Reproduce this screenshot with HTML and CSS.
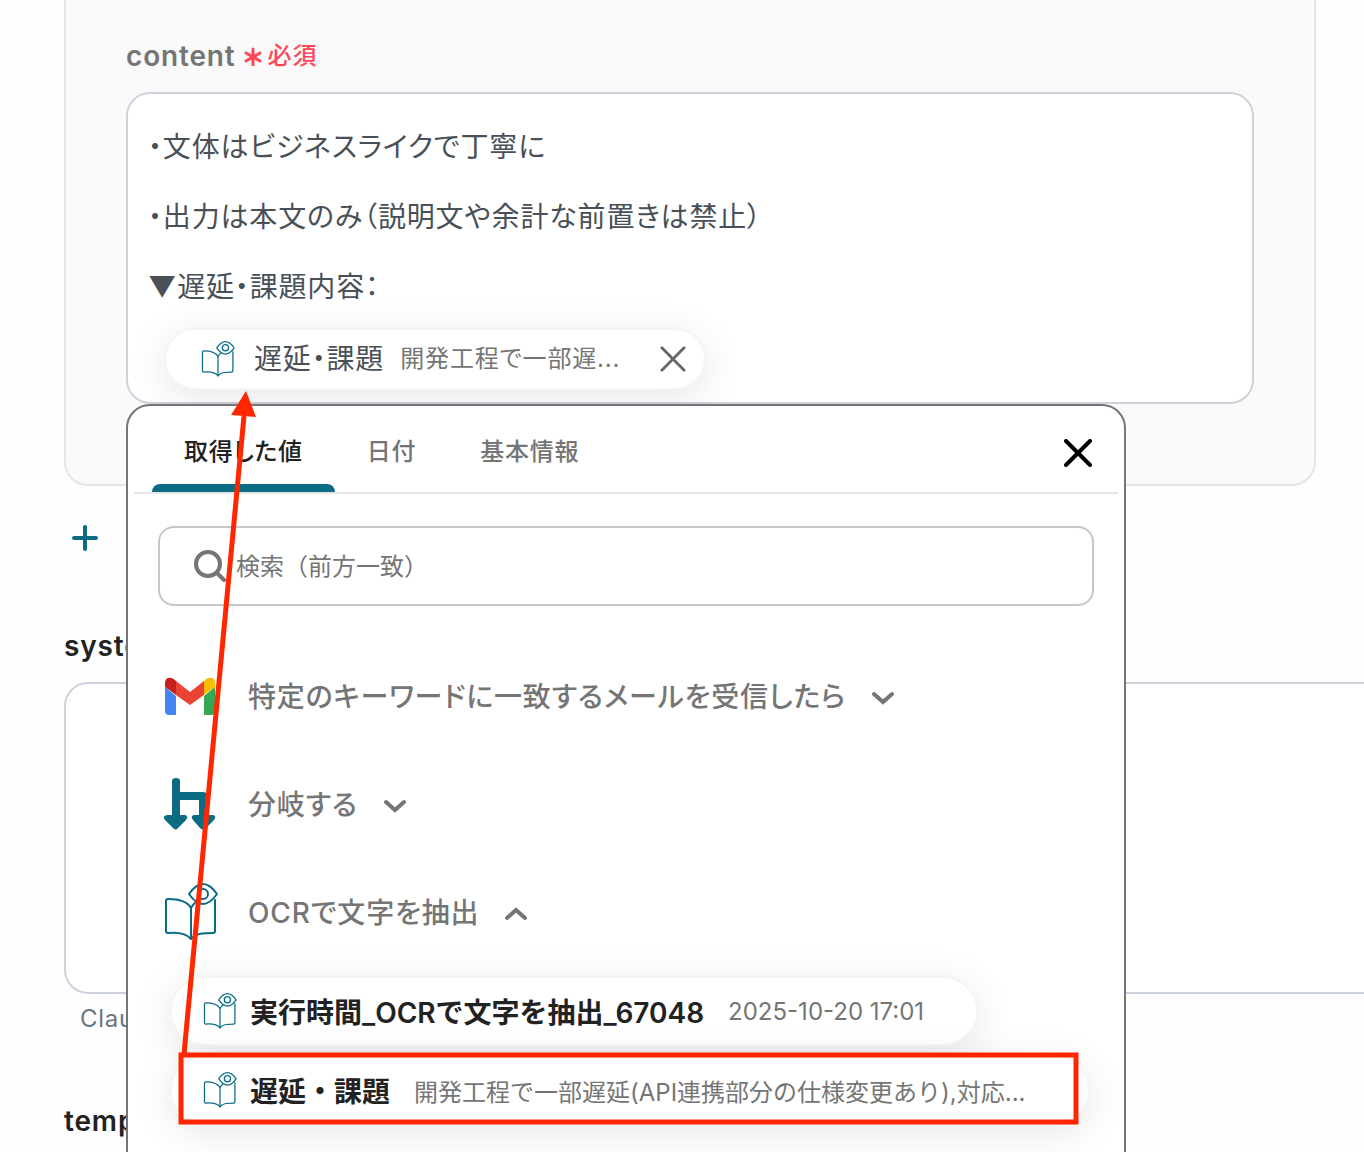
FILE: index.html
```html
<!DOCTYPE html>
<html lang="ja">
<head>
    <meta charset="UTF-8">
    <meta name="viewport" content="width=device-width, initial-scale=1.0">
    <title>content</title>
    <link rel="stylesheet" href="styles.css">
</head>
<body>
    <!-- Shared icons -->
    <svg class="sprite" aria-hidden="true">
        <symbol id="icon-book" viewBox="0 0 54 58">
            <g fill="none" stroke="currentColor" stroke-linejoin="round" stroke-linecap="round">
                <path d="M27 25C23 18 14 16 4 16Q2 16 2 18V48Q2 50 4 50C14 49 22 50 27 56C32 50 40 50 49 50Q51 50 51 48V17"/>
                <path d="M27 56V25Q29 21 32 19"/>
                <path d="M25 11Q39-9 53 11Q39 31 25 11Z"/>
                <circle cx="39" cy="11" r="5"/>
            </g>
        </symbol>
        <symbol id="icon-close" viewBox="0 0 28 28">
            <path d="M2 2L26 26M26 2L2 26" fill="none" stroke="currentColor" stroke-linecap="round"/>
        </symbol>
        <symbol id="icon-chevron" viewBox="0 0 22 14">
            <path d="M2 3L11 11L20 3" fill="none" stroke="currentColor" stroke-width="4" stroke-linecap="round"/>
        </symbol>
    </svg>

    <main class="page">
        <section class="card">
            <div class="field-label" id="content-label">content <span class="required"><svg viewBox="0 0 18 20"><path d="M9 3V19M2 7L16 15M16 7L2 15"/></svg>必須</span></div>

            <div class="editor-wrap">
                <div class="editor" contenteditable="true" role="textbox" aria-multiline="true" aria-labelledby="content-label" spellcheck="false">
                    <p>・文体はビジネスライクで丁寧に</p>
                    <p>・出力は本文のみ（説明文や余計な前置きは禁止）</p>
                    <p>▼遅延・課題内容：</p>
                    <div class="token" contenteditable="false">
                        <svg class="token-icon"><use href="#icon-book"/></svg>
                        <span class="token-name">遅延・課題</span>
                        <span class="token-value">開発工程で一部遅...</span>
                        <button type="button" class="token-remove" aria-label="削除"><svg><use href="#icon-close"/></svg></button>
                    </div>
                </div>

                <!-- Value picker -->
                <div class="picker">
                    <div class="picker-header">
                        <div class="tabs" role="tablist">
                            <button type="button" class="tab active" role="tab" aria-selected="true">取得した値</button>
                            <button type="button" class="tab" role="tab" aria-selected="false">日付</button>
                            <button type="button" class="tab" role="tab" aria-selected="false">基本情報</button>
                        </div>
                        <button type="button" class="picker-close" aria-label="閉じる"><svg><use href="#icon-close"/></svg></button>
                    </div>

                    <div class="picker-body">
                        <label class="search">
                            <svg viewBox="0 0 32 32"><circle cx="14" cy="14" r="12"/><path d="M23 23L30 30"/></svg>
                            <input type="text" placeholder="検索（前方一致）" aria-label="検索（前方一致）">
                        </label>

                        <div class="groups">
                            <button type="button" class="group" aria-expanded="false">
                                <svg class="group-icon" viewBox="0 0 52 38">
                                    <path fill="#4285f4" d="M1 10L12 19V38H5Q1 38 1 34Z"/>
                                    <path fill="#34a853" d="M40 19L51 10V34Q51 38 47 38H40Z"/>
                                    <path fill="#ea4335" d="M12 4L26 15L40 4V18L26 28L12 18Z"/>
                                    <path fill="#c5221f" d="M1 6C1 0 7-1 12 4V18L1 10Z"/>
                                    <path fill="#fbbc04" d="M40 4C45-1 51 0 51 6V10L40 18Z"/>
                                </svg>
                                特定のキーワードに一致するメールを受信したら
                                <svg class="chevron"><use href="#icon-chevron"/></svg>
                            </button>
                            <button type="button" class="group" aria-expanded="false">
                                <svg class="group-icon" viewBox="0 0 52 52">
                                    <path fill="#0a6b83" d="M8 3Q8 0 12 0T16 3V14H39Q43 14 43 18V37H49Q53 38 50 42L42 50Q39 53 36 50L29 42Q26 38 30 37H35V22H16V37H21Q25 38 22 42L14 50Q12 53 9 50L1 42Q-2 38 3 37H8Z"/>
                                </svg>
                                分岐する
                                <svg class="chevron"><use href="#icon-chevron"/></svg>
                            </button>
                            <button type="button" class="group" aria-expanded="true">
                                <svg class="group-icon book"><use href="#icon-book"/></svg>
                                OCRで文字を抽出
                                <svg class="chevron up"><use href="#icon-chevron"/></svg>
                            </button>
                        </div>

                        <div class="values">
                            <button type="button" class="value">
                                <svg class="token-icon"><use href="#icon-book"/></svg>
                                <span class="value-name">実行時間_OCRで文字を抽出_67048</span>
                                <span class="value-text">2025-10-20 17:01</span>
                            </button>
                            <button type="button" class="value long">
                                <svg class="token-icon"><use href="#icon-book"/></svg>
                                <span class="value-name">遅延・課題</span>
                                <span class="value-text">開発工程で一部遅延(API連携部分の仕様変更あり),対応...</span>
                            </button>
                        </div>
                    </div>

                    <!-- Red guide: frame around the value and arrow up to the token -->
                    <svg class="guide" viewBox="0 0 1000 748" aria-hidden="true">
                        <path d="M58 648L118 10" fill="none" stroke="#ff2600" stroke-width="5"/>
                        <path d="M120-15L105 9L130 11Z" fill="#ff2600"/>
                        <rect x="55" y="649" width="895" height="67" fill="none" stroke="#ff2600" stroke-width="5"/>
                    </svg>
                </div>
            </div>
        </section>

        <button type="button" class="add" aria-label="追加"><svg viewBox="0 0 26 26"><path d="M13 2V24M2 13H24"/></svg></button>

        <section class="field">
            <label class="field-label dark" for="system">system</label>
            <textarea id="system"></textarea>
            <p class="hint">Claude</p>
        </section>

        <section class="field">
            <label class="field-label dark" for="temperature">temperature</label>
            <textarea id="temperature"></textarea>
        </section>
    </main>
</body>
</html>
```

FILE: styles.css
```css
* {
    margin: 0;
    padding: 0;
    box-sizing: border-box;
}

body {
    font-family: Inter, 'Noto Sans CJK JP', sans-serif;
    background: #fefefe;
    color: #222;
}

button,
input,
textarea {
    font: inherit;
    color: inherit;
    background: none;
    border: none;
    outline: none;
}

button {
    cursor: pointer;
}

svg {
    display: block;
    flex-shrink: 0;
}

.sprite {
    position: absolute;
    width: 0;
    height: 0;
}

.page {
    height: 100vh;
    padding: 0 48px 0 64px;
    overflow: hidden;
}

.card {
    padding: 36px 60px 80px;
    background: #fafafa;
    border: 2px solid #e5e5e5;
    border-top: none;
    border-radius: 0 0 24px 24px;
}

.field-label {
    display: flex;
    align-items: center;
    gap: 8px;
    margin-bottom: 16px;
    font-size: 28px;
    font-weight: 600;
    line-height: 40px;
    letter-spacing: 0.03em;
    color: #757575;
}

.field-label.dark {
    color: #222;
}

.required {
    display: flex;
    align-items: center;
    gap: 6px;
    font-size: 24px;
    font-weight: 500;
    color: #ff4757;
}

.required svg {
    width: 18px;
    height: 20px;
    fill: none;
    stroke: currentColor;
    stroke-width: 3;
    stroke-linecap: round;
}

.editor-wrap {
    position: relative;
}

.editor {
    padding: 18px 20px 12px;
    background: #fff;
    border: 2px solid #cdd3de;
    border-radius: 24px;
    outline: none;
    font-size: 28px;
    line-height: 70px;
    letter-spacing: 0.03em;
    font-feature-settings: "palt";
    color: #495057;
}

.token {
    display: flex;
    align-items: center;
    width: fit-content;
    height: 62px;
    margin: 6px 0 0 16px;
    padding: 0 18px 0 34px;
    background: #fff;
    border: 2px solid #f5f5f5;
    border-radius: 32px;
    box-shadow: 0 8px 40px rgba(0, 0, 0, 0.1);
}

.token-icon {
    width: 36px;
    height: 36px;
    color: #0a6b83;
    stroke-width: 2;
}

.token-name {
    margin: 0 16px 0 18px;
}

.token-value {
    font-size: 24px;
    color: #757575;
}

.token-remove {
    margin-left: 40px;
    color: #666;
}

.token-remove svg {
    width: 26px;
    height: 26px;
    stroke-width: 3;
}

/* Picker */
.picker {
    position: absolute;
    top: 100%;
    left: 0;
    width: 1000px;
    height: 900px;
    padding: 2px 6px 0;
    background: #fff;
    border: 2px solid #757575;
    border-radius: 24px;
    z-index: 2;
}

.picker-header {
    display: flex;
    justify-content: space-between;
    align-items: center;
    padding: 0 24px 0 18px;
    border-bottom: 2px solid #e5e5e5;
}

.tabs {
    display: flex;
}

.tab {
    position: relative;
    height: 84px;
    padding: 0 32px 2px;
    font-size: 24px;
    font-weight: 500;
    letter-spacing: 0.03em;
    color: #757575;
    font-feature-settings: "palt";
}

.tab.active {
    color: #222;
}

.tab.active::after {
    content: '';
    position: absolute;
    left: 0;
    right: 0;
    bottom: 0;
    height: 8px;
    background: #0a6b83;
    border-radius: 8px 8px 0 0;
}

.picker-close {
    padding: 6px 2px 0;
}

.picker-close svg {
    width: 28px;
    height: 28px;
    stroke-width: 4;
    color: #000;
}

.picker-body {
    padding: 32px 24px;
}

.search {
    display: flex;
    align-items: center;
    gap: 10px;
    height: 80px;
    padding: 0 34px;
    border: 2px solid #c7c7c7;
    border-radius: 16px;
}

.search svg {
    width: 32px;
    height: 32px;
    fill: none;
    stroke: #757575;
    stroke-width: 4;
    stroke-linecap: round;
}

.search input {
    flex: 1;
    font-size: 24px;
}

.search input::placeholder {
    color: #757575;
}

.groups {
    display: flex;
    flex-direction: column;
    align-items: flex-start;
    padding: 36px 6px 0;
}

.group {
    display: flex;
    align-items: center;
    height: 108px;
    padding-bottom: 2px;
    font-size: 28px;
    font-weight: 500;
    letter-spacing: 0.03em;
    color: #757575;
    font-feature-settings: "palt";
}

.group-icon {
    width: 52px;
    height: 52px;
    margin: 2px 32px 0 0;
}

.group-icon.book {
    width: 54px;
    height: 58px;
    margin-right: 30px;
    color: #0a6b83;
    stroke-width: 2;
}

.chevron {
    width: 22px;
    height: 14px;
    margin: 6px 0 0 26px;
}

.chevron.up {
    transform: rotate(180deg);
}

.values {
    display: flex;
    flex-direction: column;
    align-items: flex-start;
    gap: 9px;
    padding: 10px 0 0 12px;
}

.value {
    display: flex;
    align-items: center;
    height: 70px;
    padding: 0 52px 0 30px;
    background: #fff;
    border: 2px solid #f5f5f5;
    border-radius: 35px;
    box-shadow: 0 8px 40px rgba(0, 0, 0, 0.1);
    white-space: nowrap;
}

.value.long {
    padding-right: 62px;
}

.value-name {
    margin: 0 24px 0 12px;
    font-size: 28px;
    font-weight: 600;
}

.value-text {
    font-size: 24px;
    color: #757575;
}

.guide {
    position: absolute;
    top: 0;
    left: -2px;
    width: 1000px;
    height: 748px;
    overflow: visible;
    pointer-events: none;
}

/* Lower form */
.add {
    display: flex;
    align-items: center;
    height: 40px;
    margin-top: 32px;
    padding: 0 8px;
}

.add svg {
    width: 26px;
    height: 26px;
    fill: none;
    stroke: #0a6b83;
    stroke-width: 4;
    stroke-linecap: round;
}

.field {
    margin: 68px -112px 0 0;
}

.field + .field {
    margin-top: 62px;
}

.field textarea {
    display: block;
    width: 100%;
    height: 312px;
    padding: 20px;
    background: #fff;
    border: 2px solid #cdd3de;
    border-radius: 24px;
    resize: none;
}

.hint {
    margin-top: 5px;
    padding-left: 16px;
    font-size: 24px;
    line-height: 40px;
    letter-spacing: 0.03em;
    color: #6c757d;
}
```
